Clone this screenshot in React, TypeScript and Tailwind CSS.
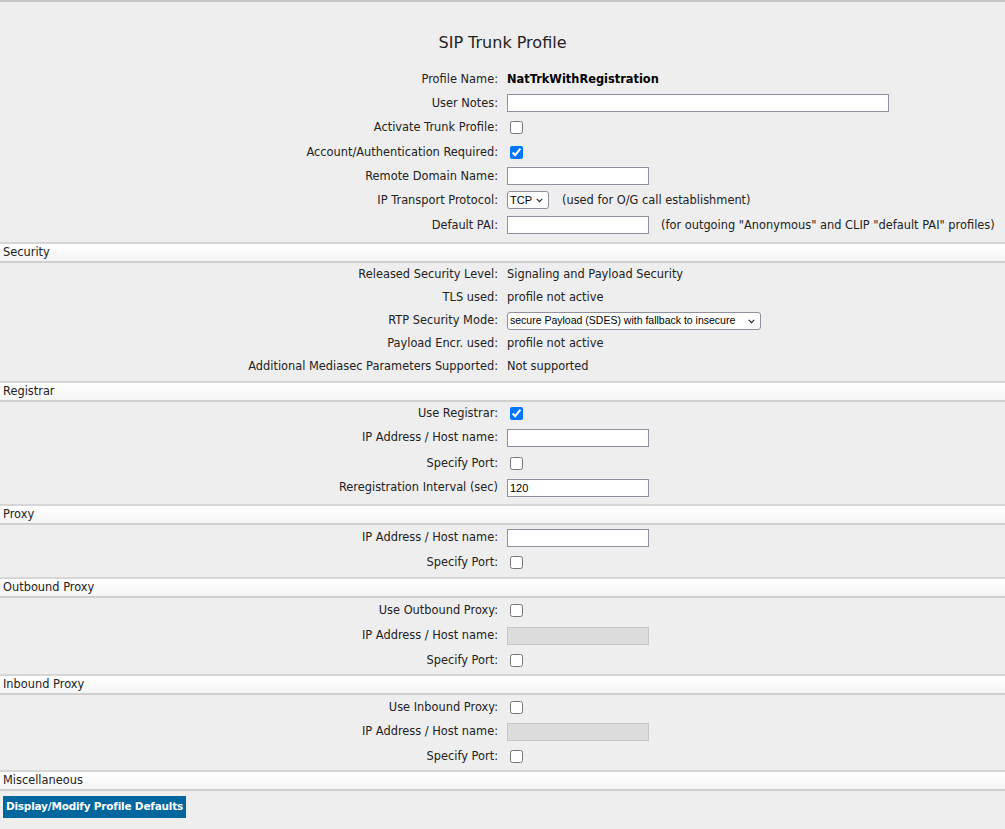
import React from "react";

const font = { fontFamily: '"DejaVu Sans", Verdana, sans-serif' };
const ctrlFont = { fontFamily: '"Liberation Sans", Arial, sans-serif' };

function Row({ label, children, h }: { label: string; children?: React.ReactNode; h: string }) {
  return (
    <div className={`grid grid-cols-[498px_1fr] items-center ${h}`}>
      <div className="text-right whitespace-nowrap pt-[1px]">{label}</div>
      <div className="pl-[9px] flex items-center whitespace-nowrap">{children}</div>
    </div>
  );
}

function Text({ w = "w-[142px]", value = "", disabled = false }: { w?: string; value?: string; disabled?: boolean }) {
  return (
    <input
      type="text"
      defaultValue={value}
      disabled={disabled}
      className={`${w} h-[18px] border px-[2px] text-[11px] text-black outline-none ${
        disabled ? "bg-[#dcdcdc] border-[#c6c6c6]" : "bg-white border-[#8f8f9d]"
      }`}
      style={ctrlFont}
    />
  );
}

function Check({ checked = false }: { checked?: boolean }) {
  return <input type="checkbox" defaultChecked={checked} className="ml-[3px] w-[13px] h-[13px]" />;
}

function Chevron() {
  return (
    <svg className="absolute right-[6px] top-[7px] pointer-events-none" width="7" height="5" viewBox="0 0 7 5">
      <path d="M0.8 0.8 L3.5 3.6 L6.2 0.8" fill="none" stroke="#222" strokeWidth="1.1" />
    </svg>
  );
}

function Select({ w, text, size }: { w: string; text: string; size: string }) {
  return (
    <div className={`relative ${w} h-[18px]`}>
      <select
        className={`appearance-none w-full h-full border border-[#8f8f9d] rounded-[3px] bg-white ${size} text-black pl-[2px] pr-[12px]`}
        style={ctrlFont}
        defaultValue={text}
      >
        <option>{text}</option>
      </select>
      <Chevron />
    </div>
  );
}

function Header({ title }: { title: string }) {
  return (
    <div className="border-t-2 border-b-2 border-t-[#d6d6d6] border-b-[#cfcfcf] bg-gradient-to-b from-white to-[#f5f5f5] h-[21px] flex items-center pl-[3px]">
      <span className="pt-[1px]">{title}</span>
    </div>
  );
}

export default function App() {
  return (
    <div className="w-[1005px] h-[829px] bg-[#eeeeee] text-[11.4px] text-[#222] overflow-hidden" style={font}>
      <div className="h-[2px] bg-[#c6c6c6]" />
      <div className="h-[65px] pt-[31px] flex justify-center">
        <span className="text-[16px] leading-[20px] text-[#222]">SIP Trunk Profile</span>
      </div>
      <div>
        <Row label="Profile Name:" h="h-[24px]">
          <span className="font-bold text-black pt-[1px]">NatTrkWithRegistration</span>
        </Row>
        <Row label="User Notes:" h="h-[24px]">
          <Text w="w-[382px]" />
        </Row>
        <Row label="Activate Trunk Profile:" h="h-[25px]">
          <Check />
        </Row>
        <Row label="Account/Authentication Required:" h="h-[24px]">
          <Check checked />
        </Row>
        <Row label="Remote Domain Name:" h="h-[24px]">
          <Text />
        </Row>
        <Row label="IP Transport Protocol:" h="h-[25px]">
          <Select w="w-[42px]" text="TCP" size="text-[11px]" />
          <span className="ml-[13px] pt-[1px]">(used for O/G call establishment)</span>
        </Row>
        <Row label="Default PAI:" h="h-[25px]">
          <Text />
          <span className="ml-[12px] pt-[1px]">(for outgoing "Anonymous" and CLIP "default PAI" profiles)</span>
        </Row>
      </div>
      <div className="h-[4px]" />
      <Header title="Security" />
      <div>
        <Row label="Released Security Level:" h="h-[23px]">
          <span className="pt-[1px]">Signaling and Payload Security</span>
        </Row>
        <Row label="TLS used:" h="h-[23px]">
          <span className="pt-[1px]">profile not active</span>
        </Row>
        <Row label="RTP Security Mode:" h="h-[23px]">
          <Select w="w-[254px]" text="secure Payload (SDES) with fallback to insecure" size="text-[10.5px]" />
        </Row>
        <Row label="Payload Encr. used:" h="h-[23px]">
          <span className="pt-[1px]">profile not active</span>
        </Row>
        <Row label="Additional Mediasec Parameters Supported:" h="h-[23px]">
          <span className="pt-[1px]">Not supported</span>
        </Row>
      </div>
      <div className="h-[3px]" />
      <Header title="Registrar" />
      <div>
        <Row label="Use Registrar:" h="h-[22px]">
          <Check checked />
        </Row>
        <Row label="IP Address / Host name:" h="h-[27px]">
          <Text />
        </Row>
        <Row label="Specify Port:" h="h-[24px]">
          <Check />
        </Row>
        <Row label="Reregistration Interval (sec)" h="h-[25px]">
          <Text value="120" />
        </Row>
      </div>
      <div className="h-[4px]" />
      <Header title="Proxy" />
      <div>
        <Row label="IP Address / Host name:" h="h-[25px]">
          <Text />
        </Row>
        <Row label="Specify Port:" h="h-[24px]">
          <Check />
        </Row>
      </div>
      <div className="h-[3px]" />
      <Header title="Outbound Proxy" />
      <div>
        <Row label="Use Outbound Proxy:" h="h-[25px]">
          <Check />
        </Row>
        <Row label="IP Address / Host name:" h="h-[25px]">
          <Text disabled />
        </Row>
        <Row label="Specify Port:" h="h-[25px]">
          <Check />
        </Row>
      </div>
      <div className="h-[1px]" />
      <Header title="Inbound Proxy" />
      <div>
        <Row label="Use Inbound Proxy:" h="h-[24px]">
          <Check />
        </Row>
        <Row label="IP Address / Host name:" h="h-[25px]">
          <Text disabled />
        </Row>
        <Row label="Specify Port:" h="h-[25px]">
          <Check />
        </Row>
      </div>
      <div className="h-[1px]" />
      <Header title="Miscellaneous" />
      <div className="pt-[5px] pl-[3px]">
        <button
          className="h-[22px] w-[183px] bg-[#00669e] text-white font-bold text-[10.5px] tracking-[-0.2px] flex items-center justify-center whitespace-nowrap"
          style={font}
        >
          Display/Modify Profile Defaults
        </button>
      </div>
    </div>
  );
}
